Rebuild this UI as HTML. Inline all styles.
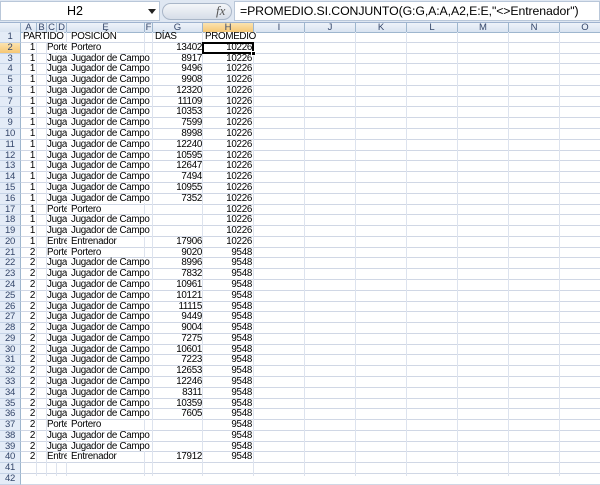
<!DOCTYPE html>
<html><head><style>
*{margin:0;padding:0;box-sizing:border-box}
body{width:600px;height:476px;overflow:hidden;background:#fff;font-family:"Liberation Sans",sans-serif;position:relative}
#fb{position:absolute;left:0;top:0;width:600px;height:23px;background:#dfe7f2;border-bottom:1px solid #9fb3cf}
#nb{position:absolute;left:0;top:1px;width:160px;height:20px;background:#fff;border:1px solid #b9c7d9;font-size:12.5px;text-align:center;line-height:19px;padding-right:10px}
#arr{position:absolute;left:148px;top:9px;width:0;height:0;border-left:4px solid transparent;border-right:4px solid transparent;border-top:5px solid #222}
#btn{position:absolute;left:162px;top:3px;width:70px;height:17px;border-radius:9px;background:linear-gradient(#f4f6f9,#d6dde8);border:1px solid #a9b6c8}
#fx{position:absolute;left:216px;top:3px;font-family:"Liberation Serif",serif;font-style:italic;font-size:13px;color:#555}
#fi{position:absolute;left:234px;top:1px;width:366px;height:20px;background:#fff;border:1px solid #b9c7d9;font-size:12.3px;line-height:19px;padding-left:5px;white-space:nowrap;letter-spacing:-0.1px}
#ch{position:absolute;left:0;top:23px;width:600px;height:9.5px;background:linear-gradient(#eef3fa,#d9e3f1);border-bottom:1px solid #9eb6ce;font-size:9.5px;color:#34466a;line-height:9px}
#ch span{position:absolute;top:0;height:9px;text-align:center;border-right:1px solid #9eb6ce}
#grid{position:absolute;left:0;top:32px;width:600px}
.r{height:10.79px;border-bottom:1px solid #d0d7e5;position:relative;font-size:9.8px;line-height:10px;letter-spacing:-0.3px}
.r b{position:absolute;left:0;width:21px;height:10.79px;top:0;background:#e4ecf7;border-right:1px solid #9eb6ce;border-bottom:1px solid #c5d3e6;font-weight:normal;text-align:center;color:#34466a;font-size:9.5px}
.r i{position:absolute;font-style:normal;top:0;white-space:nowrap;z-index:2}
.a{left:21px;width:15px;text-align:right;padding-right:1px}
.c{left:47px;width:20px;overflow:hidden;background:#fff;height:9.5px}
.e{left:71px;background:#fff;height:9.5px}
.g{left:153px;width:49px;text-align:right}
.h{left:203px;width:49px;text-align:right}
.v{position:absolute;top:32px;height:444px;width:1px;background:#dde3ee;z-index:1}
</style></head><body>
<div id="fb"><div id="nb">H2</div><div id="arr"></div><div id="btn"></div><div id="fx">fx</div><div id="fi">=PROMEDIO.SI.CONJUNTO(G:G,A:A,A2,E:E,"&lt;&gt;Entrenador")</div></div>
<div id="ch">
<span style="left:0;width:21px"></span>
<span style="left:21px;width:16px">A</span>
<span style="left:37px;width:10px">B</span>
<span style="left:47px;width:10px">C</span>
<span style="left:57px;width:10px">D</span>
<span style="left:67px;width:78px">E</span>
<span style="left:145px;width:8px">F</span>
<span style="left:153px;width:50px">G</span>
<span style="left:203px;width:51px;background:linear-gradient(#fbe3b0,#f6c774)">H</span>
<span style="left:254px;width:51px">I</span>
<span style="left:305px;width:51px">J</span>
<span style="left:356px;width:51px">K</span>
<span style="left:407px;width:51px">L</span>
<span style="left:458px;width:51px">M</span>
<span style="left:509px;width:51px">N</span>
<span style="left:560px;width:51px">O</span>
</div>
<div class="v" style="left:36px"></div><div class="v" style="left:46px"></div><div class="v" style="left:56px"></div><div class="v" style="left:66px"></div><div class="v" style="left:144px"></div><div class="v" style="left:152px"></div><div class="v" style="left:202px"></div><div class="v" style="left:253px"></div><div class="v" style="left:304px"></div><div class="v" style="left:355px"></div><div class="v" style="left:406px"></div><div class="v" style="left:457px"></div><div class="v" style="left:508px"></div><div class="v" style="left:559px"></div>
<div id="grid">
<div class="r"><b>1</b><i style="left:23px;background:#fff">PARTIDO</i><i class="e">POSICIÓN</i><i style="left:155px">DÍAS</i><i style="left:205px;background:#fff">PROMEDIO</i></div>
<div class="r"><b style="background:linear-gradient(#fbe3b0,#f6c774)">2</b><i class="a">1</i><i class="c">Porte</i><i class="e">Portero</i><i class="g">13402</i><i class="h">10226</i></div>
<div class="r"><b>3</b><i class="a">1</i><i class="c">Juga</i><i class="e">Jugador de Campo</i><i class="g">8917</i><i class="h">10226</i></div>
<div class="r"><b>4</b><i class="a">1</i><i class="c">Juga</i><i class="e">Jugador de Campo</i><i class="g">9496</i><i class="h">10226</i></div>
<div class="r"><b>5</b><i class="a">1</i><i class="c">Juga</i><i class="e">Jugador de Campo</i><i class="g">9908</i><i class="h">10226</i></div>
<div class="r"><b>6</b><i class="a">1</i><i class="c">Juga</i><i class="e">Jugador de Campo</i><i class="g">12320</i><i class="h">10226</i></div>
<div class="r"><b>7</b><i class="a">1</i><i class="c">Juga</i><i class="e">Jugador de Campo</i><i class="g">11109</i><i class="h">10226</i></div>
<div class="r"><b>8</b><i class="a">1</i><i class="c">Juga</i><i class="e">Jugador de Campo</i><i class="g">10353</i><i class="h">10226</i></div>
<div class="r"><b>9</b><i class="a">1</i><i class="c">Juga</i><i class="e">Jugador de Campo</i><i class="g">7599</i><i class="h">10226</i></div>
<div class="r"><b>10</b><i class="a">1</i><i class="c">Juga</i><i class="e">Jugador de Campo</i><i class="g">8998</i><i class="h">10226</i></div>
<div class="r"><b>11</b><i class="a">1</i><i class="c">Juga</i><i class="e">Jugador de Campo</i><i class="g">12240</i><i class="h">10226</i></div>
<div class="r"><b>12</b><i class="a">1</i><i class="c">Juga</i><i class="e">Jugador de Campo</i><i class="g">10595</i><i class="h">10226</i></div>
<div class="r"><b>13</b><i class="a">1</i><i class="c">Juga</i><i class="e">Jugador de Campo</i><i class="g">12647</i><i class="h">10226</i></div>
<div class="r"><b>14</b><i class="a">1</i><i class="c">Juga</i><i class="e">Jugador de Campo</i><i class="g">7494</i><i class="h">10226</i></div>
<div class="r"><b>15</b><i class="a">1</i><i class="c">Juga</i><i class="e">Jugador de Campo</i><i class="g">10955</i><i class="h">10226</i></div>
<div class="r"><b>16</b><i class="a">1</i><i class="c">Juga</i><i class="e">Jugador de Campo</i><i class="g">7352</i><i class="h">10226</i></div>
<div class="r"><b>17</b><i class="a">1</i><i class="c">Porte</i><i class="e">Portero</i><i class="h">10226</i></div>
<div class="r"><b>18</b><i class="a">1</i><i class="c">Juga</i><i class="e">Jugador de Campo</i><i class="h">10226</i></div>
<div class="r"><b>19</b><i class="a">1</i><i class="c">Juga</i><i class="e">Jugador de Campo</i><i class="h">10226</i></div>
<div class="r"><b>20</b><i class="a">1</i><i class="c">Entre</i><i class="e">Entrenador</i><i class="g">17906</i><i class="h">10226</i></div>
<div class="r"><b>21</b><i class="a">2</i><i class="c">Porte</i><i class="e">Portero</i><i class="g">9020</i><i class="h">9548</i></div>
<div class="r"><b>22</b><i class="a">2</i><i class="c">Juga</i><i class="e">Jugador de Campo</i><i class="g">8996</i><i class="h">9548</i></div>
<div class="r"><b>23</b><i class="a">2</i><i class="c">Juga</i><i class="e">Jugador de Campo</i><i class="g">7832</i><i class="h">9548</i></div>
<div class="r"><b>24</b><i class="a">2</i><i class="c">Juga</i><i class="e">Jugador de Campo</i><i class="g">10961</i><i class="h">9548</i></div>
<div class="r"><b>25</b><i class="a">2</i><i class="c">Juga</i><i class="e">Jugador de Campo</i><i class="g">10121</i><i class="h">9548</i></div>
<div class="r"><b>26</b><i class="a">2</i><i class="c">Juga</i><i class="e">Jugador de Campo</i><i class="g">11115</i><i class="h">9548</i></div>
<div class="r"><b>27</b><i class="a">2</i><i class="c">Juga</i><i class="e">Jugador de Campo</i><i class="g">9449</i><i class="h">9548</i></div>
<div class="r"><b>28</b><i class="a">2</i><i class="c">Juga</i><i class="e">Jugador de Campo</i><i class="g">9004</i><i class="h">9548</i></div>
<div class="r"><b>29</b><i class="a">2</i><i class="c">Juga</i><i class="e">Jugador de Campo</i><i class="g">7275</i><i class="h">9548</i></div>
<div class="r"><b>30</b><i class="a">2</i><i class="c">Juga</i><i class="e">Jugador de Campo</i><i class="g">10601</i><i class="h">9548</i></div>
<div class="r"><b>31</b><i class="a">2</i><i class="c">Juga</i><i class="e">Jugador de Campo</i><i class="g">7223</i><i class="h">9548</i></div>
<div class="r"><b>32</b><i class="a">2</i><i class="c">Juga</i><i class="e">Jugador de Campo</i><i class="g">12653</i><i class="h">9548</i></div>
<div class="r"><b>33</b><i class="a">2</i><i class="c">Juga</i><i class="e">Jugador de Campo</i><i class="g">12246</i><i class="h">9548</i></div>
<div class="r"><b>34</b><i class="a">2</i><i class="c">Juga</i><i class="e">Jugador de Campo</i><i class="g">8311</i><i class="h">9548</i></div>
<div class="r"><b>35</b><i class="a">2</i><i class="c">Juga</i><i class="e">Jugador de Campo</i><i class="g">10359</i><i class="h">9548</i></div>
<div class="r"><b>36</b><i class="a">2</i><i class="c">Juga</i><i class="e">Jugador de Campo</i><i class="g">7605</i><i class="h">9548</i></div>
<div class="r"><b>37</b><i class="a">2</i><i class="c">Porte</i><i class="e">Portero</i><i class="h">9548</i></div>
<div class="r"><b>38</b><i class="a">2</i><i class="c">Juga</i><i class="e">Jugador de Campo</i><i class="h">9548</i></div>
<div class="r"><b>39</b><i class="a">2</i><i class="c">Juga</i><i class="e">Jugador de Campo</i><i class="h">9548</i></div>
<div class="r"><b>40</b><i class="a">2</i><i class="c">Entre</i><i class="e">Entrenador</i><i class="g">17912</i><i class="h">9548</i></div>
<div class="r"><b>41</b></div>
<div class="r"><b>42</b></div>
</div>
<div style="position:absolute;left:202px;top:42px;width:52px;height:11.5px;border:2px solid #000;z-index:3"></div>
<div style="position:absolute;left:251px;top:51px;width:5px;height:5px;background:#000;border:1px solid #fff;z-index:4"></div>
</body></html>
